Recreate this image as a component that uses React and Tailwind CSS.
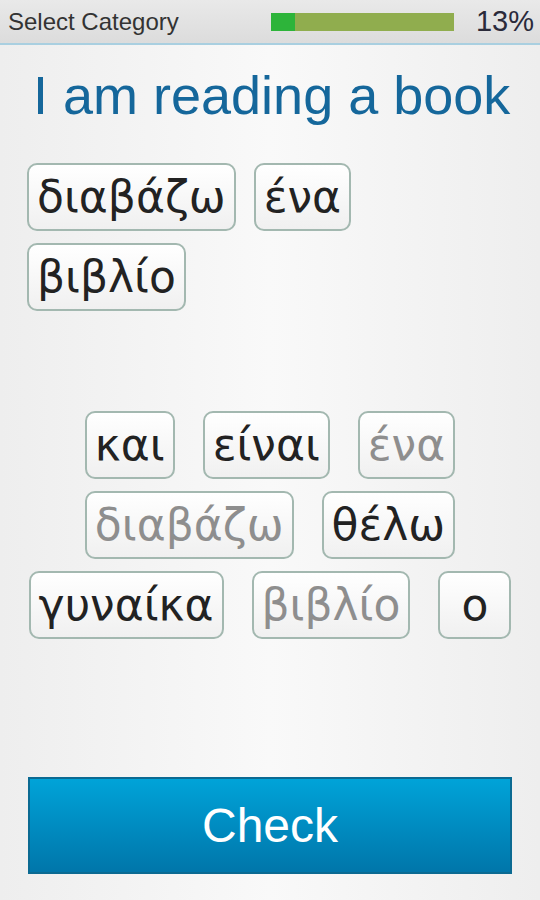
import { useState } from "react";

const ANSWER = ["διαβάζω", "ένα", "βιβλίο"];

const POOL = [
  [
    { word: "και", used: false },
    { word: "είναι", used: false },
    { word: "ένα", used: true },
  ],
  [
    { word: "διαβάζω", used: true },
    { word: "θέλω", used: false },
  ],
  [
    { word: "γυναίκα", used: false },
    { word: "βιβλίο", used: true },
    { word: "ο", used: false },
  ],
];

function Chip({ word, used }) {
  return (
    <div
      className={
        "h-[68px] min-w-[73px] flex items-center justify-center px-[8px] rounded-[10px] border-2 border-[#a3b8b0] bg-gradient-to-b from-[#ffffff] to-[#f0f0f0] text-[44px] leading-none font-['DejaVu_Sans',sans-serif] " +
        (used ? "text-[#8e8e8e]" : "text-[#222]")
      }
    >
      {word}
    </div>
  );
}

export default function App() {
  const [progress] = useState(13);

  return (
    <div className="w-[540px] h-[900px] flex flex-col bg-gradient-to-r from-[#eeeeee] via-[#f9f9f9] to-[#eeeeee] font-['Liberation_Sans',Arial,sans-serif]">
      <div className="h-[45px] shrink-0 flex items-center bg-gradient-to-b from-[#e9e9e9] to-[#dcdcdc] border-b-2 border-[#a9cfe0]">
        <span className="pl-[8px] text-[24px] text-[#333]">Select Category</span>
        <div className="ml-auto w-[183px] h-[18px] bg-[#90ad4e] flex">
          <div className="h-full bg-[#2db43a]" style={{ width: "24px" }} />
        </div>
        <span className="ml-[22px] pr-[6px] text-[29px] text-[#2a2a3a]">{progress}%</span>
      </div>

      <h1 className="mt-[23px] pl-[33px] text-[54px] leading-none text-[#15679b]">I am reading a book</h1>

      <div className="mt-[41px] px-[27px] flex flex-wrap gap-x-[18px] gap-y-[12px] h-[148px] content-start">
        {ANSWER.map((w) => (
          <Chip key={w} word={w} />
        ))}
      </div>

      <div className="mt-[100px] flex flex-col items-center gap-[12px]">
        {POOL.map((row, i) => (
          <div key={i} className="flex gap-[28px]">
            {row.map((c) => (
              <Chip key={c.word} word={c.word} used={c.used} />
            ))}
          </div>
        ))}
      </div>

      <div className="mt-auto mb-[26px] px-[28px]">
        <button
          type="button"
          className="w-full h-[97px] border-2 border-[#0b6a92] bg-gradient-to-b from-[#00a3d8] to-[#0076aa] text-white text-[48px]"
        >
          Check
        </button>
      </div>
    </div>
  );
}
